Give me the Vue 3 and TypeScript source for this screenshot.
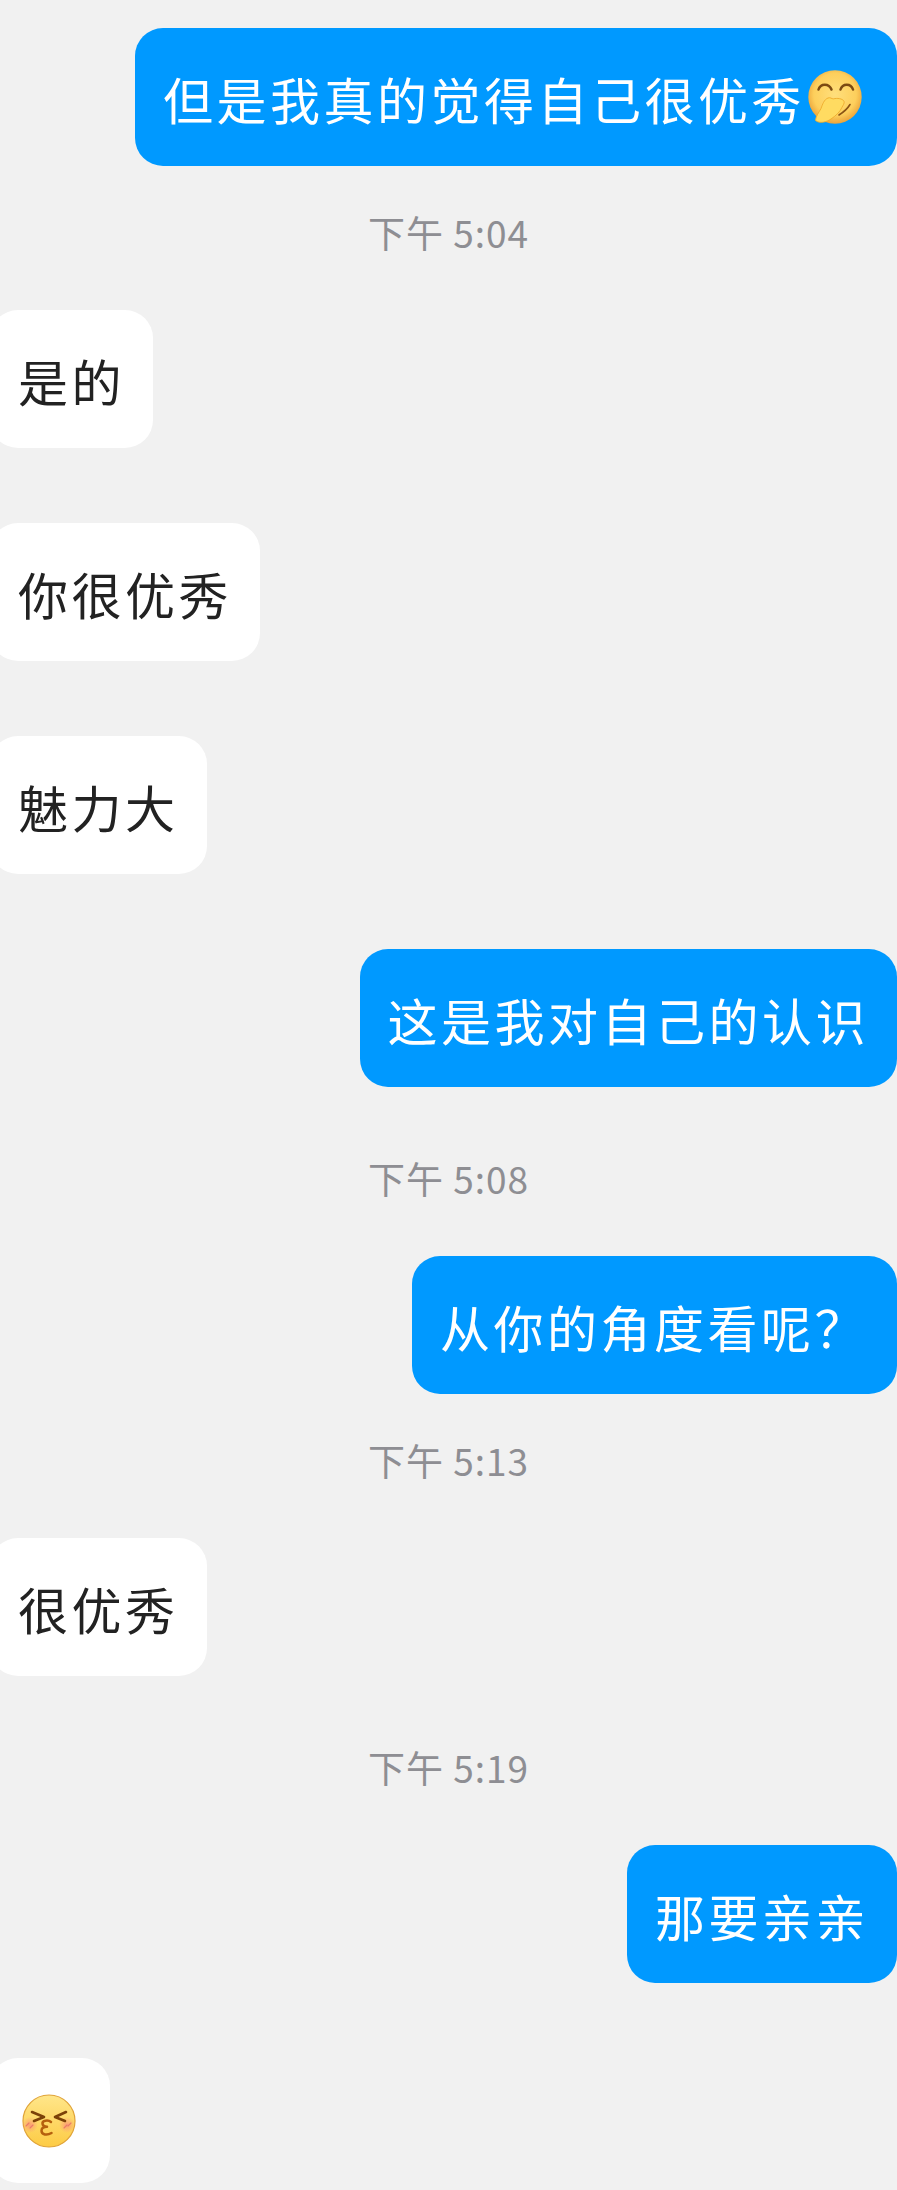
<script setup lang="ts">
type Item = {
  kind: "me" | "them" | "time";
  text: string;
  loose?: boolean;
  wide?: boolean;
  emoji?: "shy" | "kiss";
};

const items: Item[] = [
  { kind: "me", text: "但是我真的觉得自己很优秀", emoji: "shy" },
  { kind: "time", text: "下午 5:04" },
  { kind: "them", text: "是的" },
  { kind: "them", text: "你很优秀" },
  { kind: "them", text: "魅力大" },
  { kind: "me", text: "这是我对自己的认识" },
  { kind: "time", text: "下午 5:08", loose: true },
  { kind: "me", text: "从你的角度看呢？", wide: true },
  { kind: "time", text: "下午 5:13" },
  { kind: "them", text: "很优秀" },
  { kind: "time", text: "下午 5:19", loose: true },
  { kind: "me", text: "那要亲亲" },
  { kind: "them", text: "", emoji: "kiss" },
];
</script>

<template>
  <div class="chat">
    <template v-for="(item, i) in items" :key="i">
      <div v-if="item.kind === 'time'" class="time" :class="{ loose: item.loose }">
        {{ item.text }}
      </div>
      <div v-else class="bubble" :class="[item.kind, { sticker: !item.text, wide: item.wide }]">
        {{ item.text }}
        <svg v-if="item.emoji === 'shy'" class="emoji shy" viewBox="0 0 54 54">
          <defs>
            <radialGradient id="shyFace" cx="50%" cy="45%" r="55%">
              <stop offset="0%" stop-color="#ffdf7c" />
              <stop offset="72%" stop-color="#fdcf5c" />
              <stop offset="100%" stop-color="#eba33a" />
            </radialGradient>
          </defs>
          <circle cx="27" cy="27" r="26.7" fill="url(#shyFace)" />
          <path d="M10.5 19.5c2-6.500 10.500-6.500 13 0M32.500 19.500c2-6.500 10.500-6.500 12.500 0" fill="none" stroke="#7c4a12" stroke-width="2.5" stroke-linecap="round" />
          <path d="M42 34.500c-3 5-7 8-11 10.500" fill="none" stroke="#8a5314" stroke-width="1.6" stroke-linecap="round" />
          <path d="M7.500 50.500c.5-5 3.500-8 5.500-12 1.500-4 3-9 7-10.500 2.500-1 3.500 1 5.500.8 3.500-.8 9-.5 10.500 2.500.8 2.200-1 3.700-2 6-2 4.700-6.500 8.700-11 11.700-4.500 3-11 5-15.500 1.500z" fill="#ffdb61" stroke="#eeac2c" stroke-width="0.9" />
        </svg>
        <svg v-if="item.emoji === 'kiss'" class="emoji" viewBox="0 0 54 54">
          <defs>
            <linearGradient id="kissFace" x1="0" y1="0" x2="0" y2="1">
              <stop offset="0%" stop-color="#ffe68a" />
              <stop offset="100%" stop-color="#fdcb44" />
            </linearGradient>
            <radialGradient id="blush">
              <stop offset="0%" stop-color="#fb8f78" stop-opacity="0.8" />
              <stop offset="100%" stop-color="#fb8f78" stop-opacity="0" />
            </radialGradient>
          </defs>
          <circle cx="27" cy="27" r="26" fill="url(#kissFace)" stroke="#e0a338" stroke-width="1.2" />
          <circle cx="8" cy="31" r="8" fill="url(#blush)" />
          <circle cx="45" cy="31" r="8" fill="url(#blush)" />
          <path d="M10 18l12 5-10 4M44 18l-11 5 10 4" fill="none" stroke="#7c4208" stroke-width="2.6" stroke-linecap="round" stroke-linejoin="round" />
          <path d="M29 28c-3-2.500-9-1.500-8.500 1.800.3 2 2.500 3 4.500 3-3 0-5.500 1.400-5.500 4 0 4 5.500 5 10 2.200" fill="none" stroke="#b5600e" stroke-width="2.500" stroke-linecap="round" stroke-linejoin="round" />
          <path d="M4 32l3-3M8 34l3-3M42 34l3-3M46 32l3-3" stroke="#ea7a6a" stroke-width="1.1" stroke-linecap="round" />
        </svg>
      </div>
    </template>
  </div>
</template>

<style scoped>
.chat {
  display: flex;
  flex-direction: column;
  align-items: flex-start;
  width: 897px;
  height: 2190px;
  overflow: hidden;
  padding-top: 28px;
  box-sizing: border-box;
  background: #f1f1f1;
  font-family: "Noto Sans CJK SC", "Liberation Sans", sans-serif;
}

.bubble {
  display: flex;
  align-items: center;
  box-sizing: border-box;
  height: 138px;
  padding: 2px 28px 0 28px;
  border-radius: 28px;
  font-size: 50px;
  letter-spacing: 3.5px;
  white-space: nowrap;
}

.me {
  align-self: flex-end;
  background: #0099ff;
  color: #fff;
}

.them {
  margin-left: -10px;
  background: #fff;
  color: #222;
}

.bubble + .bubble {
  margin-top: 75px;
}

.wide {
  padding-right: 29px;
}

.sticker {
  height: 125px;
  padding: 0 34px 0 32px;
}

.time {
  align-self: center;
  height: 44px;
  margin: 44px 0 56px;
  color: #8e8e93;
  font-size: 37px;
  line-height: 44px;
  letter-spacing: 1px;
}

.time.loose {
  margin-top: 69px;
}

.emoji {
  flex: none;
  width: 54px;
  height: 54px;
}

.shy {
  margin: -2px 7px 0 3px;
}
</style>

<style>
html,
body {
  background: #f1f1f1;
}
</style>
